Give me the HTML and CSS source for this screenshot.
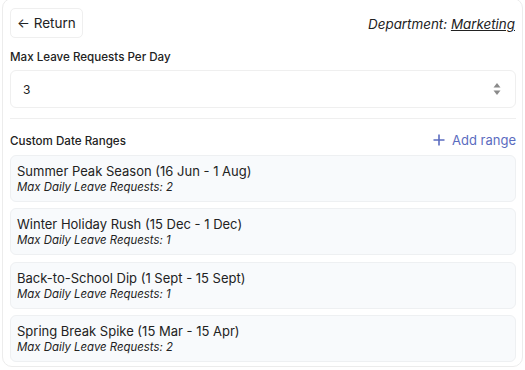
FILE: index.html
```html
<!DOCTYPE html>
<html lang="en">
<head>
    <meta charset="UTF-8">
    <meta name="viewport" content="width=device-width, initial-scale=1.0">
    <title>Leave Limits</title>
    <link rel="stylesheet" href="styles.css">
</head>
<body>
    <div class="panel">
        <div class="top-bar">
            <button class="return-button">&larr; Return</button>
            <div class="department">Department: <a href="#">Marketing</a></div>
        </div>

        <label class="field-label" for="max-leave">Max Leave Requests Per Day</label>
        <div class="number-input">
            <span class="number-value">3</span>
            <span class="spinner">
                <svg width="8" height="14" viewBox="0 0 8 14">
                    <path d="M4 1 L7.5 5.5 H0.5 Z" fill="#8a8a8a"/>
                    <path d="M4 13 L7.5 8.5 H0.5 Z" fill="#8a8a8a"/>
                </svg>
            </span>
        </div>

        <div class="divider"></div>

        <div class="ranges-header">
            <span class="field-label">Custom Date Ranges</span>
            <a href="#" class="add-range">
                <svg width="12" height="12" viewBox="0 0 12 12">
                    <path d="M6 0.5 V11.5 M0.5 6 H11.5" stroke="#5b6cc0" stroke-width="1.6"/>
                </svg>
                Add range
            </a>
        </div>

        <div class="range-list">
            <div class="range-card">
                <div class="range-title">Summer Peak Season (16 Jun - 1 Aug)</div>
                <div class="range-sub">Max Daily Leave Requests: 2</div>
            </div>
            <div class="range-card">
                <div class="range-title">Winter Holiday Rush (15 Dec - 1 Dec)</div>
                <div class="range-sub">Max Daily Leave Requests: 1</div>
            </div>
            <div class="range-card">
                <div class="range-title">Back-to-School Dip (1 Sept - 15 Sept)</div>
                <div class="range-sub">Max Daily Leave Requests: 1</div>
            </div>
            <div class="range-card">
                <div class="range-title">Spring Break Spike (15 Mar - 15 Apr)</div>
                <div class="range-sub">Max Daily Leave Requests: 2</div>
            </div>
        </div>
    </div>
</body>
</html>
```

FILE: styles.css
```css
body {
    margin: 0;
    font-family: Inter, "Noto Sans", sans-serif;
    background-color: #fff;
    color: #222;
}

.panel {
    box-sizing: border-box;
    width: 521px;
    height: 369px;
    margin: -2px 0 0 2px;
    padding: 9px 6px 0 7px;
    border: 1px solid #ececec;
    border-radius: 10px;
}

.top-bar {
    display: flex;
    justify-content: space-between;
    align-items: center;
}

.return-button {
    height: 30px;
    padding: 0 6px;
    background: #fff;
    border: 1px solid #efefef;
    border-radius: 5px;
    font-family: inherit;
    font-size: 13.5px;
    color: #222;
}

.department {
    font-size: 13.4px;
    font-style: italic;
    color: #222;
    margin-top: 2px;
    margin-right: 1px;
}

.department a {
    color: #222;
    text-decoration: underline;
}

.field-label {
    display: block;
    margin-top: 12px;
    font-size: 11.6px;
    font-weight: 500;
    color: #222;
}

.number-input {
    display: flex;
    align-items: center;
    justify-content: space-between;
    height: 38px;
    box-sizing: border-box;
    margin-top: 6px;
    padding: 0 14px 0 12px;
    border: 1px solid #efefef;
    border-radius: 6px;
}

.number-value {
    font-size: 12px;
}

.spinner {
    display: flex;
}

.divider {
    height: 1px;
    background: #efefef;
    margin-top: 10px;
}

.ranges-header {
    display: flex;
    justify-content: space-between;
    align-items: center;
    margin-top: 12px;
}

.ranges-header .field-label {
    margin-top: 3px;
}

.add-range {
    display: flex;
    align-items: center;
    gap: 7px;
    font-size: 13px;
    color: #5b6cc0;
    text-decoration: none;
}

.range-list {
    display: flex;
    flex-direction: column;
    gap: 6.3px;
    margin-top: 7px;
}

.range-card {
    box-sizing: border-box;
    height: 47px;
    padding: 6px 6px 0;
    background: #f8fafc;
    border: 1px solid #eef0f2;
    border-radius: 6px;
}

.range-title {
    font-size: 13px;
    line-height: 18px;
    color: #222;
}

.range-sub {
    font-size: 11.4px;
    line-height: 15px;
    font-style: italic;
    color: #222;
}
```
